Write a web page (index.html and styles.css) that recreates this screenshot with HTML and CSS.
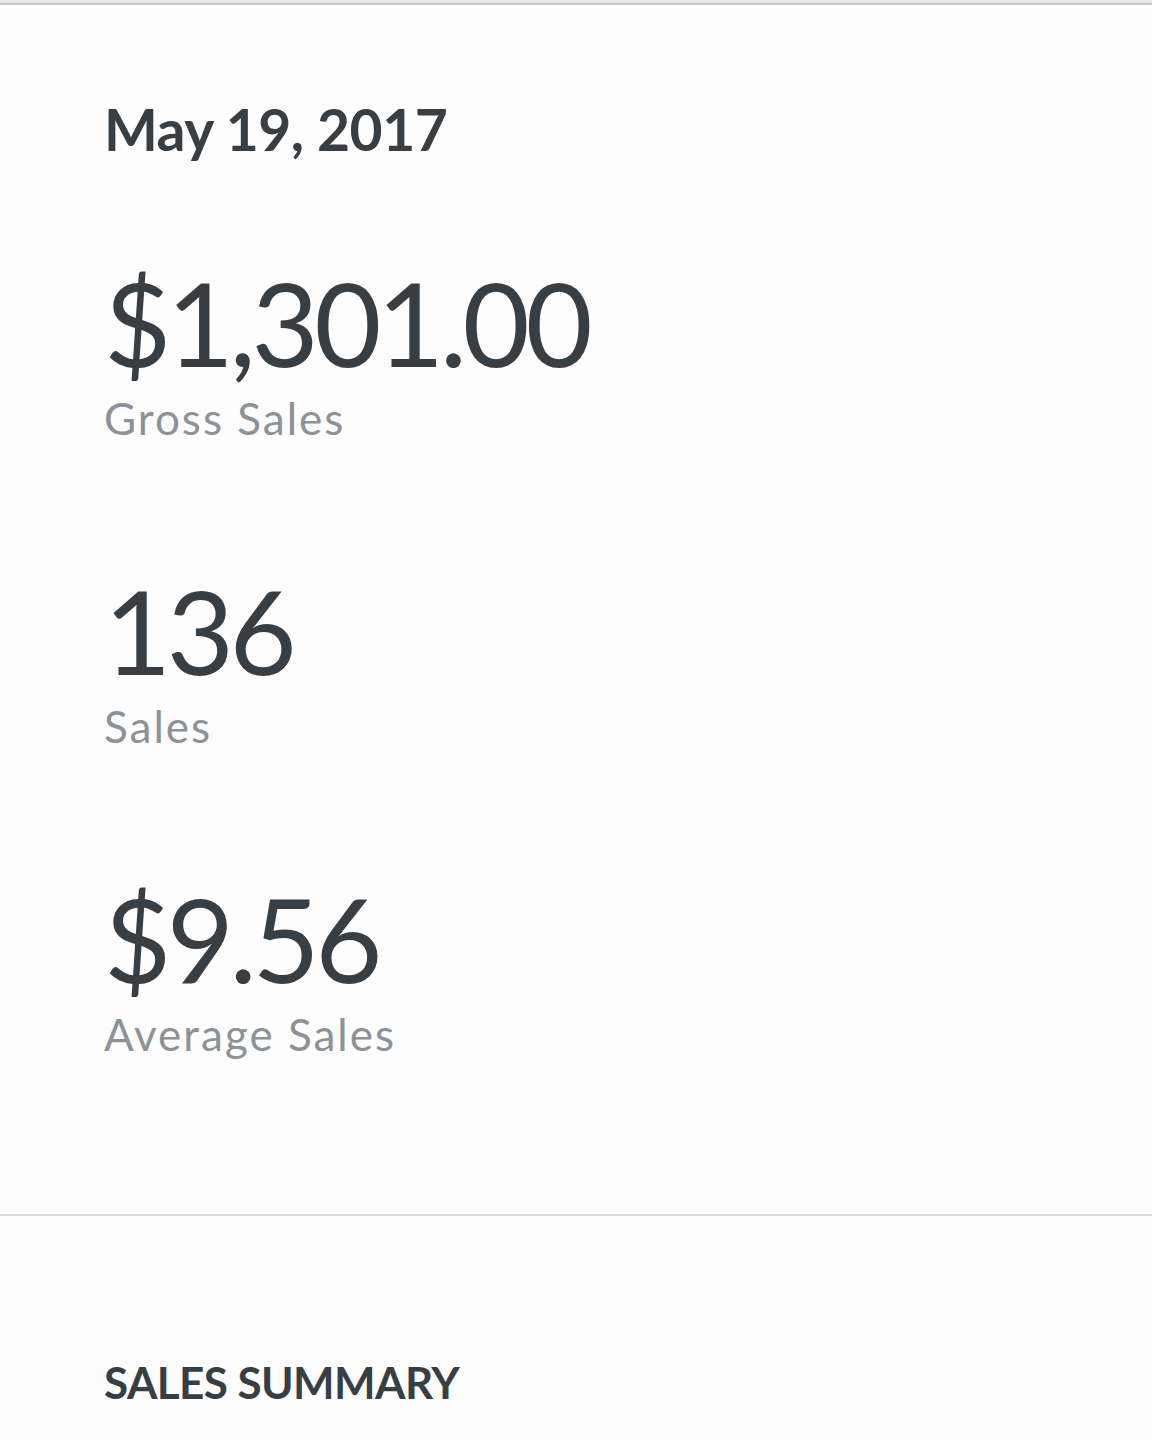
FILE: index.html
```html
<!doctype html>
<html>
  <head>
    <meta charset="utf-8">
    <meta name="viewport" content="width=device-width, initial-scale=1.0">
    <title>Sales Report</title>
    <link rel="stylesheet" href="styles.css">
  </head>
  <body>
    <div class="topbar"></div>

    <main>
      <!-- daily totals -->
      <section class="overview">
        <h1 class="date">May 19, 2017</h1>

        <div class="stats">
          <div class="stat">
            <div class="value">$1,301.00</div>
            <div class="label">Gross Sales</div>
          </div>
          <div class="stat">
            <div class="value">136</div>
            <div class="label">Sales</div>
          </div>
          <div class="stat">
            <div class="value">$9.56</div>
            <div class="label">Average Sales</div>
          </div>
        </div>
      </section>

      <section class="summary">
        <h2>SALES SUMMARY</h2>
      </section>
    </main>
  </body>
</html>
```

FILE: styles.css
```css
body {
  margin: 0px;
  background-color: #fdfdfd;
  color: #373f45;
  font-family: Lato, "Liberation Sans", sans-serif;
}

.topbar {
  height: 3px;
  background-color: #e6e8e9;
  border-bottom: 2px solid #c3c7c9;
}

.overview {
  padding: 96px 0px 158px 104px;
  border-bottom: 2px solid #d9dadb;
}

.date {
  margin: 0px 0px 107px 0px;
  font-size: 57px;
  line-height: 1;
  font-weight: 700;
  letter-spacing: -0.5px;
}

.stats {
  display: flex;
  flex-direction: column;
  gap: 133px;
}

.value {
  font-size: 116px;
  line-height: 1;
  font-weight: 400;
  letter-spacing: -4.5px;
}

.label {
  margin-top: 15px;
  font-size: 44px;
  line-height: 1;
  letter-spacing: 2px;
  color: #8b9398;
}

.summary {
  padding: 144px 0px 0px 104px;
}

.summary h2 {
  margin: 0px;
  font-size: 44px;
  line-height: 1;
  font-weight: 700;
  letter-spacing: -0.6px;
}
```
